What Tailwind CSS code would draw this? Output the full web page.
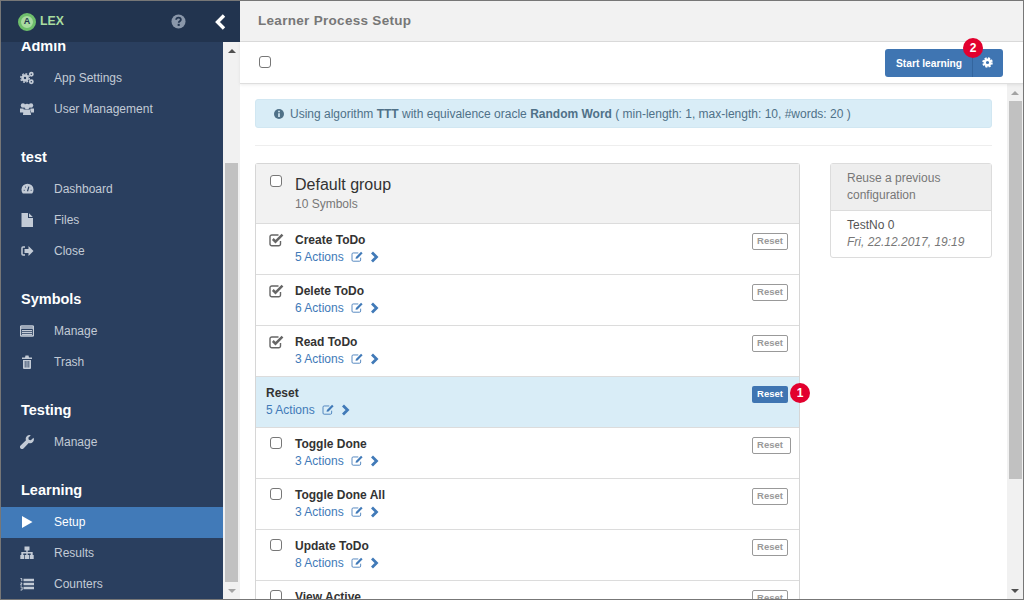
<!DOCTYPE html>
<html><head><meta charset="utf-8"><script src="https://cdn.jsdelivr.net/npm/@tailwindcss/browser@4"></script>
<title>ALEX</title></head>
<body class="w-[1024px] h-[600px] overflow-hidden bg-white font-['Liberation_Sans',Arial,sans-serif]">
<svg class="hidden"><defs>
<symbol id="cog" viewBox="0 0 24 24"><circle cx="12" cy="12" r="6" fill="none" stroke="currentColor" stroke-width="5"/><circle cx="12" cy="12" r="9.5" fill="none" stroke="currentColor" stroke-width="4" stroke-dasharray="4.5 2.96"/></symbol>
<symbol id="edit" viewBox="0 0 16 14"><path d="M12 8.500V11.500a1.500 1.500 0 0 1-1.500 1.500H2.500A1.500 1.500 0 0 1 1 11.500V4A1.500 1.500 0 0 1 2.500 2.500H9" fill="none" stroke="currentColor" stroke-width="1.100"/><path d="M6 7.500 12.500 1l2 2L8 9.500 5.500 10z" fill="currentColor"/></symbol>
<symbol id="chev" viewBox="0 0 9 12"><path d="M2 1.500 6.500 6 2 10.500" fill="none" stroke="currentColor" stroke-width="2.800"/></symbol>
<symbol id="chk" viewBox="0 0 15 14"><path d="M11.500 8V11a1.800 1.800 0 0 1-1.800 1.800H2.800A1.800 1.800 0 0 1 1 11V3.800A1.800 1.800 0 0 1 2.800 2H9.500" fill="none" stroke="currentColor" stroke-width="1.400"/><path d="M3.800 6 6.500 8.700 13.500 1.700" fill="none" stroke="currentColor" stroke-width="2.500"/></symbol>
</defs></svg>

<div class="flex h-[600px] w-[1024px] border border-[#777]">
  <!-- sidebar -->
  <aside class="flex h-full w-[239px] shrink-0 flex-col bg-[#2a3f5f]">
    <div class="flex h-[41px] shrink-0 items-center bg-[#22344f] pl-[17px]">
      <span class="flex h-[18px] w-[18px] items-center justify-center rounded-full border-[3px] border-[#6fbf6c] bg-[#a9dba0] text-[9px] font-bold leading-none text-[#22344f]">A</span>
      <span class="ml-[4px] text-[12.250px] font-bold leading-none text-[#a9dda0]">LEX</span>
      <svg class="ml-[107px] h-[15px] w-[15px] text-[#8a97aa]" viewBox="0 0 16 16"><circle cx="8" cy="8" r="7.500" fill="currentColor"/><path d="M5.500 6.200C5.500 4.600 6.700 3.800 8 3.800S10.500 4.600 10.500 6C10.500 7.600 8.200 7.700 8.200 9.300" fill="none" stroke="#22344f" stroke-width="1.900"/><rect x="7.100" y="10.500" width="2.200" height="2.200" fill="#22344f"/></svg>
      <svg class="ml-[29px] h-[16px] w-[11px] text-white" viewBox="0 0 11 16"><path d="M9 1.500 2.500 8 9 14.500" fill="none" stroke="currentColor" stroke-width="3.400"/></svg>
    </div>
    <div class="flex min-h-0 flex-1">
      <nav class="h-full w-[222px] overflow-hidden">
        <div class="-mt-[11px]">
          <section class="mb-[17px]">
            <h2 class="flex h-[32px] items-center pl-[20px] text-[14.500px] font-bold text-white">Admin</h2>
            <a class="flex h-[31px] items-center pb-[2px] text-[12px] text-[#c3cbd6]"><svg class="ml-[19px] mr-[20px] h-[14px] w-[14px] text-[#c3cbd6]" viewBox="0 0 14 14"><circle cx="5" cy="7" r="2.500" fill="none" stroke="currentColor" stroke-width="2.600"/><circle cx="5" cy="7" r="4.300" fill="none" stroke="currentColor" stroke-width="1.400" stroke-dasharray="1.800 1.570"/><circle cx="11.300" cy="3.300" r="1.600" fill="none" stroke="currentColor" stroke-width="1.700"/><circle cx="11.300" cy="10.800" r="1.600" fill="none" stroke="currentColor" stroke-width="1.700"/></svg>App Settings</a>
            <a class="flex h-[31px] items-center pb-[2px] text-[12px] text-[#c3cbd6]"><svg class="ml-[19px] mr-[20px] h-[14px] w-[14px] text-[#c3cbd6]" viewBox="0 0 14 14" fill="currentColor"><circle cx="3" cy="3.500" r="2.200"/><circle cx="11" cy="3.500" r="2.200"/><circle cx="7" cy="4.500" r="2.800"/><path d="M0 6.500h3.500l.5 4H0zM14 6.500h-3.500l-.5 4h4zM3.500 7.500h7l.5 5.500H3z"/></svg>User Management</a>
          </section>
          <section class="mb-[17px]">
            <h2 class="flex h-[32px] items-center pl-[20px] text-[14.500px] font-bold text-white">test</h2>
            <a class="flex h-[31px] items-center pb-[2px] text-[12px] text-[#c3cbd6]"><svg class="ml-[20px] mr-[20px] h-[13px] w-[13px] text-[#c3cbd6]" viewBox="0 0 14 14"><path fill="currentColor" d="M2 12.500A6.500 6.500 0 1 1 12 12.500z"/><path d="M7 10 8.500 5M3 9h.8M4.300 5.500h.8M7 3.500h.1M10.500 9h.8M9.800 5.500h.1" stroke="#2a3f5f" stroke-width="1.300" fill="none"/></svg>Dashboard</a>
            <a class="flex h-[31px] items-center pb-[2px] text-[12px] text-[#c3cbd6]"><svg class="ml-[19px] mr-[20px] h-[14px] w-[14px] text-[#c3cbd6]" viewBox="0 0 14 14" fill="currentColor"><path d="M1.500 0h6.500v5h5v9H1.500zM9 .3 12.800 4H9z"/></svg>Files</a>
            <a class="flex h-[31px] items-center pb-[2px] text-[12px] text-[#c3cbd6]"><svg class="ml-[19px] mr-[20px] h-[14px] w-[14px] text-[#c3cbd6]" viewBox="0 0 14 14"><path d="M5 3H3A1 1 0 0 0 2 4v6a1 1 0 0 0 1 1h2" fill="none" stroke="currentColor" stroke-width="1.500"/><path fill="currentColor" d="M4.500 5h4V2L13.500 7l-5 5V9h-4z"/></svg>Close</a>
          </section>
          <section class="mb-[17px]">
            <h2 class="flex h-[32px] items-center pl-[20px] text-[14.500px] font-bold text-white">Symbols</h2>
            <a class="flex h-[31px] items-center pb-[2px] text-[12px] text-[#c3cbd6]"><svg class="ml-[19px] mr-[20px] h-[14px] w-[14px] text-[#c3cbd6]" viewBox="0 0 14 14"><rect x=".5" y="2" width="13" height="10" rx="1" fill="none" stroke="currentColor" stroke-width="1.400"/><path d="M1 4h12" stroke="currentColor" stroke-width="1.500"/><path d="M2 6.700h10M2 8.700h10M2 10.600h10" stroke="currentColor" stroke-width="1.300"/></svg>Manage</a>
            <a class="flex h-[31px] items-center pb-[2px] text-[12px] text-[#c3cbd6]"><svg class="ml-[19px] mr-[20px] h-[14px] w-[14px] text-[#c3cbd6]" viewBox="0 0 14 14" fill="currentColor"><path d="M2 2.500h3l.5-2h3l.5 2h3v1.500H2zM3 5h8v8a1 1 0 0 1-1 1H4a1 1 0 0 1-1-1z"/><path d="M5.200 6v6.500M7 6v6.500M8.800 6v6.500" stroke="#2a3f5f" stroke-width=".8"/></svg>Trash</a>
          </section>
          <section class="mb-[17px]">
            <h2 class="flex h-[32px] items-center pl-[20px] text-[14.500px] font-bold text-white">Testing</h2>
            <a class="flex h-[31px] items-center pb-[2px] text-[12px] text-[#c3cbd6]"><svg class="ml-[19px] mr-[20px] h-[14px] w-[14px] text-[#c3cbd6]" viewBox="0 0 14 14" fill="currentColor"><path d="M13.500 2.800 10.800 5.300l-2-.5L8.300 2.700 10.800.3A3.800 3.800 0 0 0 6 5.300L.6 10.500a2 2 0 0 0 2.900 2.900L8.700 8A3.800 3.800 0 0 0 13.500 2.800z"/></svg>Manage</a>
          </section>
          <section>
            <h2 class="flex h-[32px] items-center pl-[20px] text-[14.500px] font-bold text-white">Learning</h2>
            <a class="flex h-[31px] items-center bg-[#417ab8] pb-[2px] text-[12px] text-white"><svg class="ml-[19px] mr-[20px] h-[14px] w-[14px] text-white" viewBox="0 0 14 14" fill="currentColor"><path d="M2 1 12.500 7 2 13z"/></svg>Setup</a>
            <a class="flex h-[31px] items-center pb-[2px] text-[12px] text-[#c3cbd6]"><svg class="ml-[19px] mr-[20px] h-[14px] w-[14px] text-[#c3cbd6]" viewBox="0 0 14 14" fill="currentColor"><path d="M4.500 .5h5v4H7.700V6h5v3h1v4h-4V9h1V7.500H7.700V9h1.300v4H5V9h1.300V7.500H3.300V9h1v4H.3V9h1V6h5V4.500H4.500z"/></svg>Results</a>
            <a class="flex h-[31px] items-center pb-[2px] text-[12px] text-[#c3cbd6]"><svg class="ml-[19px] mr-[20px] h-[14px] w-[14px] text-[#c3cbd6]" viewBox="0 0 14 14"><path d="M3.500 3h10.500M3.500 7h10.500M3.500 11h10.500" stroke="currentColor" stroke-width="2.400" fill="none"/><path d="M.5 1.500h1.300v2.700M.5 6h1.600L.5 8h1.600M.5 10h1.600v3H.5" stroke="currentColor" stroke-width="1" fill="none"/></svg>Counters</a>
          </section>
        </div>
      </nav>
      <div class="flex h-full w-[17px] flex-col bg-[#f1f1f1]">
        <div class="flex h-[17px] items-center justify-center"><span class="h-0 w-0 border-x-[4px] border-b-[4px] border-x-transparent border-b-[#505050]"></span></div>
        <div class="mx-[2px] mt-[104px] h-[419px] bg-[#c1c1c1]"></div>
        <div class="flex h-[17px] items-center justify-center"><span class="h-0 w-0 border-x-[4px] border-t-[4px] border-x-transparent border-t-[#a3a3a3]"></span></div>
      </div>
    </div>
  </aside>

  <!-- main -->
  <main class="flex h-full min-w-0 flex-1 flex-col">
    <header class="flex h-[41px] shrink-0 items-center border-b border-[#dcdcdc] bg-[#f2f2f2] pl-[18px]">
      <h1 class="text-[13.500px] font-bold tracking-[.3px] text-[#777]">Learner Process Setup</h1>
    </header>
    <div class="z-10 flex h-[42px] shrink-0 items-center justify-between border-b border-[#dedede] bg-white pr-[20px] pl-[19px] shadow-[0_1px_3px_rgba(0,0,0,.08)]">
      <input type="checkbox" class="mb-[2px] h-[12px] w-[12px] appearance-none rounded-[3px] border border-[#777] bg-white" aria-label="Select all">
      <div class="relative flex h-[28px] w-[118px] overflow-visible rounded-[3px] bg-[#3f75b2] text-white">
        <button class="flex-1 border-r border-[#33659e] pt-[2px] pl-[1px] text-[10.250px] font-bold">Start learning</button>
        <button class="flex w-[30px] items-center justify-center pr-[2px]" aria-label="Settings"><svg class="h-[11px] w-[11px]"><use href="#cog"/></svg></button>
        <span class="absolute -top-[11px] left-[78px] flex h-[20px] w-[20px] items-center justify-center rounded-full bg-[#e2002e] text-[12px] font-bold text-white">2</span>
      </div>
    </div>
    <div class="flex min-h-0 flex-1">
      <div class="h-full min-w-0 flex-1 overflow-hidden pr-[14px] pl-[15px] pt-[15px]">
        <div class="flex h-[29px] w-[737px] items-center rounded-[3px] border border-[#d1e7f2] bg-[#d9edf7] pl-[18px] text-[12px] text-[#4f7188]">
          <svg class="mr-[6px] h-[10px] w-[10px] shrink-0" viewBox="0 0 10 10"><circle cx="5" cy="5" r="5" fill="currentColor"/><path d="M5 4.300V8M5 1.800V3.200" stroke="#d9edf7" stroke-width="1.600"/></svg>
          <span>Using algorithm <b>TTT</b> with equivalence oracle <b>Random Word</b> ( min-length: 1, max-length: 10, #words: 20 )</span>
        </div>
        <hr class="mt-[17px] mb-[17px] w-[737px] border-[#eee]">
        <div class="flex items-start">
          <section class="w-[545px] rounded-t-[3px] border border-b-0 border-[#d6d6d6]">
            <div class="relative h-[60px] border-b border-[#dcdcdc] bg-[#f2f2f2]">
              <input type="checkbox" class="absolute top-[11px] left-[14px] h-[12px] w-[12px] appearance-none rounded-[3px] border border-[#777] bg-white" aria-label="Select group">
              <h3 class="pt-[11px] pl-[39px] text-[16px] leading-[20px] text-[#333]">Default group</h3>
              <p class="pt-[1px] pl-[39px] text-[12px] leading-[16px] text-[#777]">10 Symbols</p>
            </div>

            <div class="relative h-[51px] border-b border-[#dcdcdc] pl-[39px]">
              <svg class="absolute top-[9px] left-[13px] h-[14px] w-[15px] text-[#666]"><use href="#chk"/></svg>
              <p class="pt-[8px] text-[12px] leading-[16px] font-bold text-[#333]">Create ToDo</p>
              <p class="flex items-center pt-[1px] text-[12px] leading-[17px] text-[#417ab8]">5 Actions<svg class="ml-[7px] h-[11px] w-[13px] -translate-y-px"><use href="#edit"/></svg><svg class="ml-[6px] h-[12px] w-[9px] -translate-y-px"><use href="#chev"/></svg></p>
              <span class="absolute top-[9px] left-[496px] flex h-[17px] w-[36px] items-center justify-center rounded-[2px] border border-[#999] text-[9.500px] font-bold text-[#999]">Reset</span>
            </div>
            <div class="relative h-[51px] border-b border-[#dcdcdc] pl-[39px]">
              <svg class="absolute top-[9px] left-[13px] h-[14px] w-[15px] text-[#666]"><use href="#chk"/></svg>
              <p class="pt-[8px] text-[12px] leading-[16px] font-bold text-[#333]">Delete ToDo</p>
              <p class="flex items-center pt-[1px] text-[12px] leading-[17px] text-[#417ab8]">6 Actions<svg class="ml-[7px] h-[11px] w-[13px] -translate-y-px"><use href="#edit"/></svg><svg class="ml-[6px] h-[12px] w-[9px] -translate-y-px"><use href="#chev"/></svg></p>
              <span class="absolute top-[9px] left-[496px] flex h-[17px] w-[36px] items-center justify-center rounded-[2px] border border-[#999] text-[9.500px] font-bold text-[#999]">Reset</span>
            </div>
            <div class="relative h-[51px] border-b border-[#dcdcdc] pl-[39px]">
              <svg class="absolute top-[9px] left-[13px] h-[14px] w-[15px] text-[#666]"><use href="#chk"/></svg>
              <p class="pt-[8px] text-[12px] leading-[16px] font-bold text-[#333]">Read ToDo</p>
              <p class="flex items-center pt-[1px] text-[12px] leading-[17px] text-[#417ab8]">3 Actions<svg class="ml-[7px] h-[11px] w-[13px] -translate-y-px"><use href="#edit"/></svg><svg class="ml-[6px] h-[12px] w-[9px] -translate-y-px"><use href="#chev"/></svg></p>
              <span class="absolute top-[9px] left-[496px] flex h-[17px] w-[36px] items-center justify-center rounded-[2px] border border-[#999] text-[9.500px] font-bold text-[#999]">Reset</span>
            </div>
            <div class="relative h-[51px] border-b border-[#dcdcdc] bg-[#d9edf7] pl-[10px]">
              <p class="pt-[8px] text-[12px] leading-[16px] font-bold text-[#333]">Reset</p>
              <p class="flex items-center pt-[1px] text-[12px] leading-[17px] text-[#417ab8]">5 Actions<svg class="ml-[7px] h-[11px] w-[13px] -translate-y-px"><use href="#edit"/></svg><svg class="ml-[6px] h-[12px] w-[9px] -translate-y-px"><use href="#chev"/></svg></p>
              <span class="absolute top-[9px] left-[496px] flex h-[17px] w-[36px] items-center justify-center rounded-[2px] bg-[#3f75b2] text-[9.500px] font-bold text-white">Reset</span>
              <span class="absolute top-[6px] left-[534px] flex h-[20px] w-[20px] items-center justify-center rounded-full bg-[#e2002e] text-[12px] font-bold text-white">1</span>
            </div>
            <div class="relative h-[51px] border-b border-[#dcdcdc] pl-[39px]">
              <input type="checkbox" class="absolute top-[9px] left-[14px] h-[12px] w-[12px] appearance-none rounded-[3px] border border-[#777] bg-white" aria-label="Toggle Done">
              <p class="pt-[8px] text-[12px] leading-[16px] font-bold text-[#333]">Toggle Done</p>
              <p class="flex items-center pt-[1px] text-[12px] leading-[17px] text-[#417ab8]">3 Actions<svg class="ml-[7px] h-[11px] w-[13px] -translate-y-px"><use href="#edit"/></svg><svg class="ml-[6px] h-[12px] w-[9px] -translate-y-px"><use href="#chev"/></svg></p>
              <span class="absolute top-[9px] left-[496px] flex h-[17px] w-[39px] items-center justify-center rounded-[2px] border border-[#999] pr-[3px] text-[9.500px] font-bold text-[#999]">Reset</span>
            </div>
            <div class="relative h-[51px] border-b border-[#dcdcdc] pl-[39px]">
              <input type="checkbox" class="absolute top-[9px] left-[14px] h-[12px] w-[12px] appearance-none rounded-[3px] border border-[#777] bg-white" aria-label="Toggle Done All">
              <p class="pt-[8px] text-[12px] leading-[16px] font-bold text-[#333]">Toggle Done All</p>
              <p class="flex items-center pt-[1px] text-[12px] leading-[17px] text-[#417ab8]">3 Actions<svg class="ml-[7px] h-[11px] w-[13px] -translate-y-px"><use href="#edit"/></svg><svg class="ml-[6px] h-[12px] w-[9px] -translate-y-px"><use href="#chev"/></svg></p>
              <span class="absolute top-[9px] left-[496px] flex h-[17px] w-[36px] items-center justify-center rounded-[2px] border border-[#999] text-[9.500px] font-bold text-[#999]">Reset</span>
            </div>
            <div class="relative h-[51px] border-b border-[#dcdcdc] pl-[39px]">
              <input type="checkbox" class="absolute top-[9px] left-[14px] h-[12px] w-[12px] appearance-none rounded-[3px] border border-[#777] bg-white" aria-label="Update ToDo">
              <p class="pt-[8px] text-[12px] leading-[16px] font-bold text-[#333]">Update ToDo</p>
              <p class="flex items-center pt-[1px] text-[12px] leading-[17px] text-[#417ab8]">8 Actions<svg class="ml-[7px] h-[11px] w-[13px] -translate-y-px"><use href="#edit"/></svg><svg class="ml-[6px] h-[12px] w-[9px] -translate-y-px"><use href="#chev"/></svg></p>
              <span class="absolute top-[9px] left-[496px] flex h-[17px] w-[36px] items-center justify-center rounded-[2px] border border-[#999] text-[9.500px] font-bold text-[#999]">Reset</span>
            </div>
            <div class="relative h-[51px] pl-[39px]">
              <input type="checkbox" class="absolute top-[9px] left-[14px] h-[12px] w-[12px] appearance-none rounded-[3px] border border-[#777] bg-white" aria-label="View Active">
              <p class="pt-[8px] text-[12px] leading-[16px] font-bold text-[#333]">View Active</p>
              <span class="absolute top-[9px] left-[496px] flex h-[17px] w-[36px] items-center justify-center rounded-[2px] border border-[#999] text-[9.500px] font-bold text-[#999]">Reset</span>
            </div>
          </section>
          <aside class="ml-[30px] w-[162px] rounded-[3px] border border-[#dcdcdc]">
            <div class="h-[47px] border-b border-[#dcdcdc] bg-[#eee] px-[16px] pt-[6px] text-[12px] leading-[17px] text-[#777]">Reuse a previous configuration</div>
            <div class="h-[46px] px-[16px] pt-[6px] text-[12px] leading-[17px] text-[#555]">TestNo 0<br><i class="text-[#777]">Fri, 22.12.2017, 19:19</i></div>
          </aside>
        </div>
      </div>
      <div class="flex h-full w-[16px] shrink-0 flex-col bg-[#f1f1f1]">
        <div class="flex h-[17px] items-center justify-center"><span class="h-0 w-0 border-x-[4px] border-b-[4px] border-x-transparent border-b-[#a3a3a3]"></span></div>
        <div class="mr-[1px] ml-[2px] h-[378px] bg-[#c1c1c1]"></div>
        <div class="flex-1"></div>
        <div class="flex h-[17px] items-center justify-center"><span class="h-0 w-0 border-x-[4px] border-t-[4px] border-x-transparent border-t-[#505050]"></span></div>
      </div>
    </div>
  </main>
</div>
</body></html>
